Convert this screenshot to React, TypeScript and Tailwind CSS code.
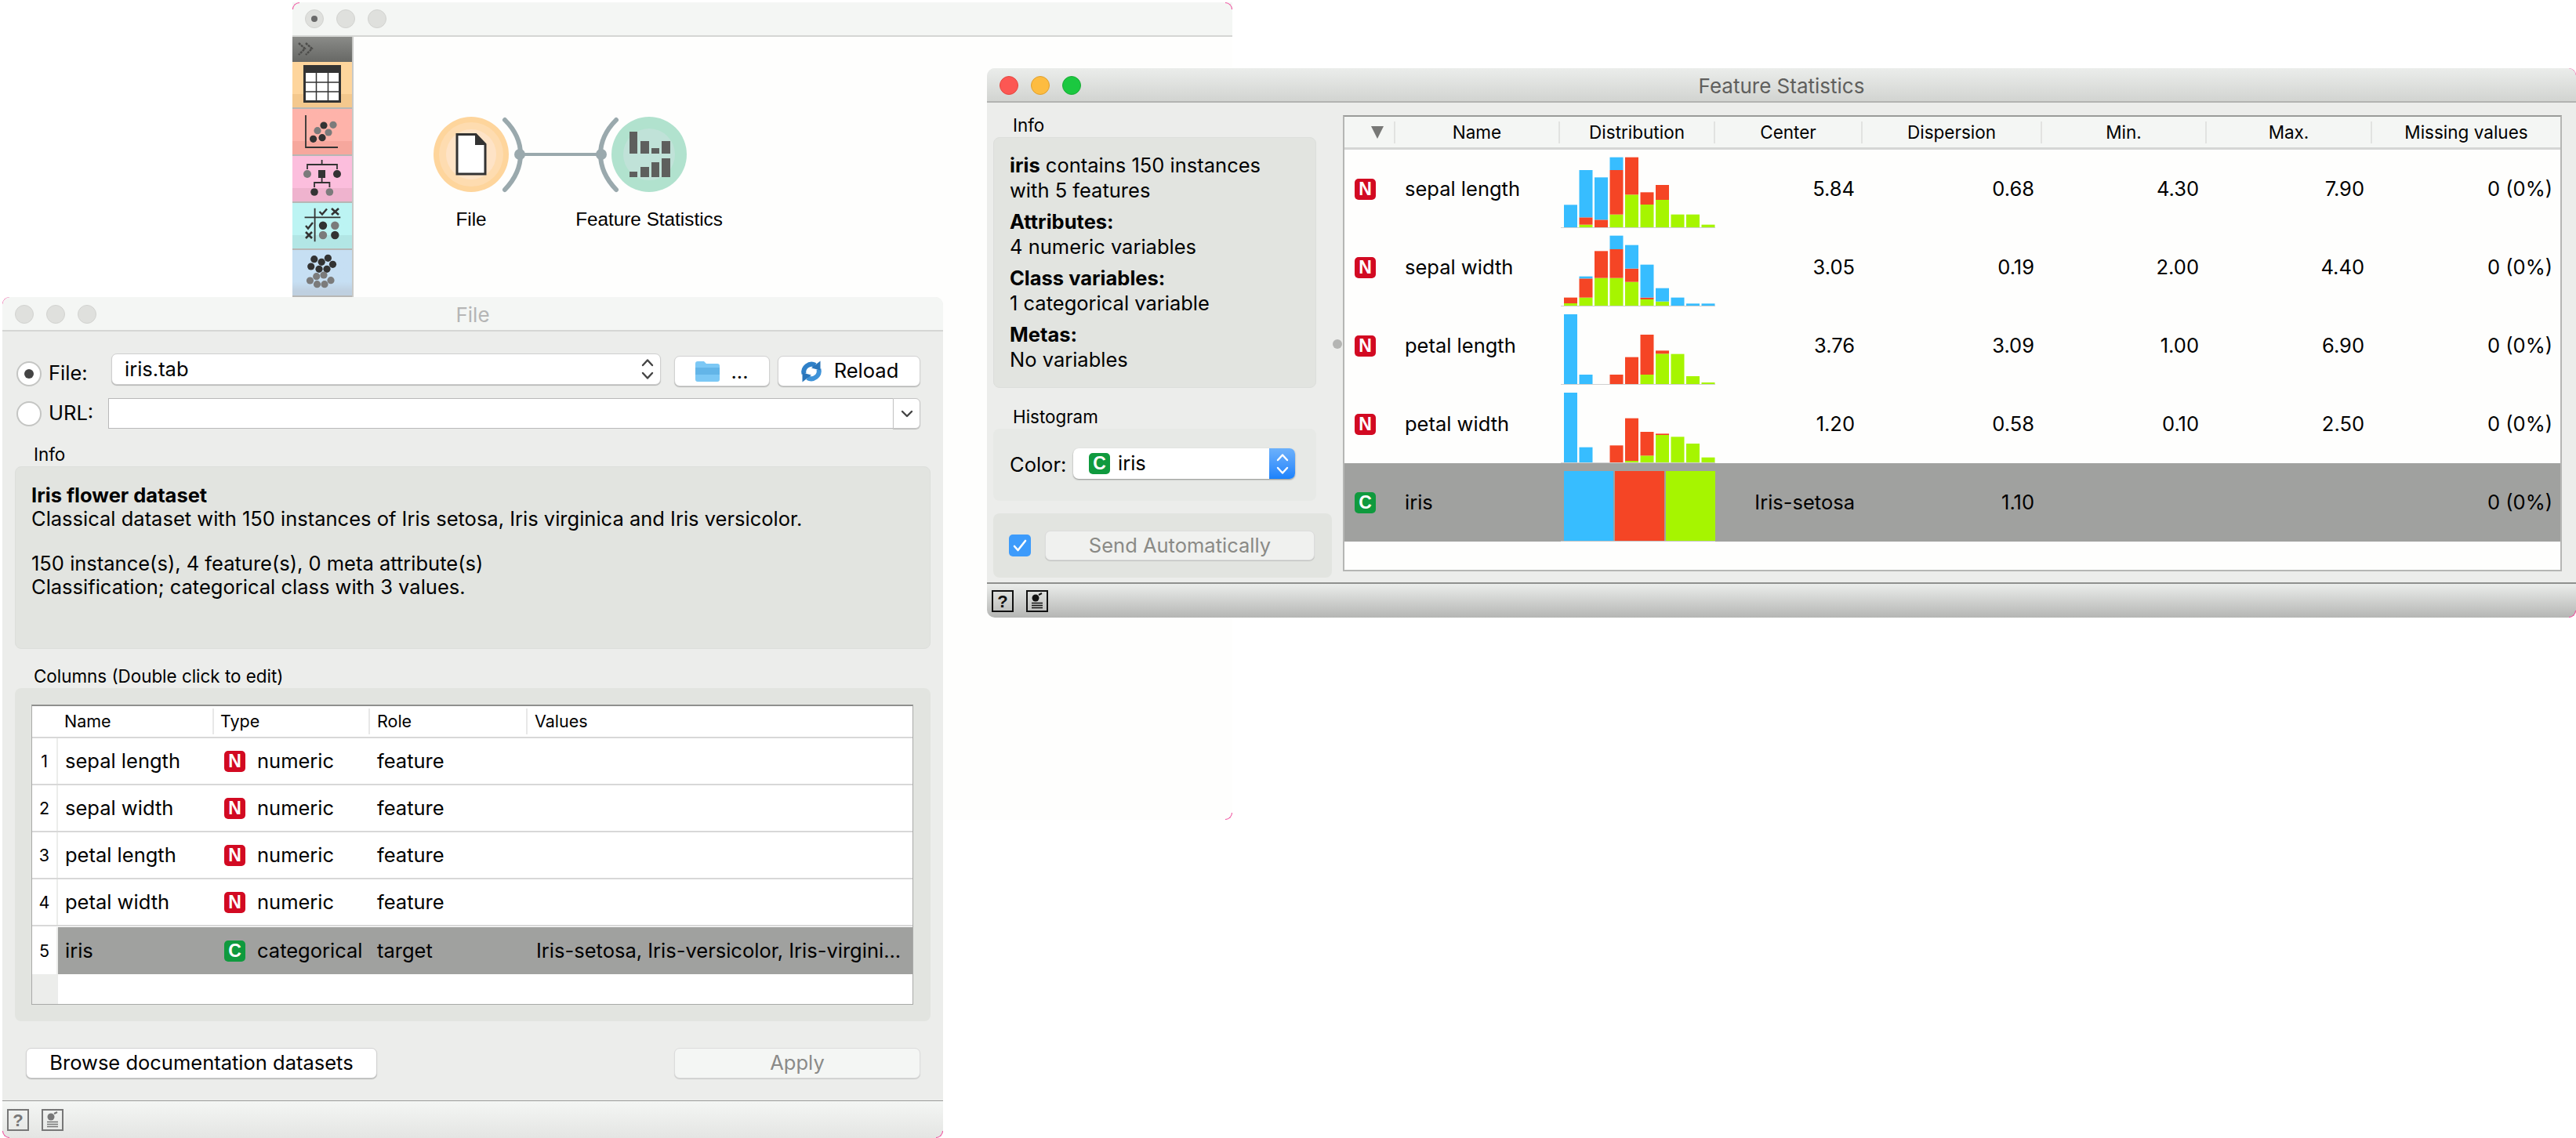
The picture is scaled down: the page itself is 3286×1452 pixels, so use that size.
import React from "react";

const BLUE = "#37bdff";
const RED = "#f54525";
const GREEN = "#a6f500";

// segments are [green, red, blue], heights in px x3 as read from the zoomed picture
const hist: Record<string, number[][]> = {
    "sepal length": [[0, 0, 86], [10, 28, 181], [0, 29, 162], [49, 170, 49], [125, 143, 0], [87, 47, 0], [105, 57, 0], [49, 0, 0], [49, 0, 0], [10, 0, 0]],
    "sepal width": [[9, 22, 0], [31, 73, 8], [106, 103, 0], [106, 110, 52], [91, 51, 90], [24, 7, 126], [16, 0, 51], [0, 0, 31], [0, 0, 8], [0, 0, 8]],
    "petal length": [[0, 0, 267], [0, 0, 36], [0, 0, 0], [0, 36, 0], [0, 103, 0], [36, 153, 0], [116, 12, 0], [115, 0, 0], [30, 0, 0], [6, 0, 0]],
    "petal width": [[0, 0, 267], [0, 0, 58], [0, 0, 0], [0, 65, 0], [6, 163, 0], [26, 91, 0], [105, 5, 0], [98, 0, 0], [72, 0, 0], [19, 0, 0]],
};

const fsRows = [
    { name: "sepal length", center: "5.84", disp: "0.68", min: "4.30", max: "7.90" },
    { name: "sepal width", center: "3.05", disp: "0.19", min: "2.00", max: "4.40" },
    { name: "petal length", center: "3.76", disp: "3.09", min: "1.00", max: "6.90" },
    { name: "petal width", center: "1.20", disp: "0.58", min: "0.10", max: "2.50" },
];

const fileRows = [
    { name: "sepal length", type: "numeric", role: "feature", values: "" },
    { name: "sepal width", type: "numeric", role: "feature", values: "" },
    { name: "petal length", type: "numeric", role: "feature", values: "" },
    { name: "petal width", type: "numeric", role: "feature", values: "" },
];

function Histogram({ name }: { name: string }) {
    const baseline = 99;
    return (
        <svg width="198" height="100" viewBox="0 0 198 100" className="block">
            {hist[name].map((segs, i) => {
                const x = 5 + i * 19.5;
                const g = segs[0] / 3;
                const r = segs[1] / 3;
                const b = segs[2] / 3;
                return (
                    <g key={i}>
                        <rect x={x} y={baseline - g} width="17" height={g} fill={GREEN} />
                        <rect x={x} y={baseline - g - r} width="17" height={r} fill={RED} />
                        <rect x={x} y={baseline - g - r - b} width="17" height={b} fill={BLUE} />
                    </g>
                );
            })}
            <rect x="1" y="99" width="198" height="1" fill="#d0d0d0" />
        </svg>
    );
}

function ClassHistogram() {
    return (
        <svg width="198" height="100" viewBox="0 0 198 100" className="block">
            <rect x="5" y="10" width="63" height="89" fill={BLUE} />
            <rect x="70" y="10" width="63" height="89" fill={RED} />
            <rect x="135" y="10" width="63" height="89" fill={GREEN} />
            <rect x="1" y="99" width="198" height="1" fill="#c4c4c4" />
        </svg>
    );
}

function Badge({ kind }: { kind: "N" | "C" }) {
    return (
        <span
            className={`flex h-[27px] w-[27px] shrink-0 items-center justify-center rounded-[5px] font-['Liberation_Sans',sans-serif] text-[23px] font-bold leading-none text-white ${kind === "N" ? "bg-[#d20a22]" : "bg-[#0f9a3e]"}`}
        >
            {kind}
        </span>
    );
}

function Lights({ dot }: { dot?: boolean }) {
    return (
        <div className="flex items-center gap-[16px]">
            {[0, 1, 2].map((i) => (
                <span key={i} className="flex h-[24px] w-[24px] items-center justify-center rounded-full border border-[#d2d3d0] bg-[#dfe0dd]">
                    {dot && i === 0 ? <span className="h-[8px] w-[8px] rounded-full bg-[#6a6a6a]" /> : null}
                </span>
            ))}
        </div>
    );
}

function ColorLights() {
    return (
        <div className="flex items-center gap-[16px]">
            <span className="h-[24px] w-[24px] rounded-full border border-[#e5463f] bg-[#fc5753]" />
            <span className="h-[24px] w-[24px] rounded-full border border-[#dfa02e] bg-[#fdbc40]" />
            <span className="h-[24px] w-[24px] rounded-full border border-[#1aab36] bg-[#1bc840]" />
        </div>
    );
}

function Updown({ color }: { color: string }) {
    return (
        <svg width="16" height="30" viewBox="0 0 16 30" fill="none" stroke={color} strokeWidth="2.4" strokeLinecap="round" strokeLinejoin="round">
            <path d="M2 10 L8 3.5 L14 10" />
            <path d="M2 20 L8 26.5 L14 20" />
        </svg>
    );
}

function HelpIcons({ color }: { color: string }) {
    return (
        <div className="flex gap-[16px]">
            <svg width="28" height="28" viewBox="0 0 28 28" fill="none">
                <rect x="1" y="1" width="26" height="26" stroke={color} strokeWidth="2" />
                <text x="14" y="22" textAnchor="middle" fontSize="22" fontWeight="700" fontFamily="Liberation Sans, sans-serif" fill={color}>?</text>
            </svg>
            <svg width="28" height="28" viewBox="0 0 28 28" fill="none">
                <rect x="1" y="1" width="26" height="26" stroke={color} strokeWidth="2" />
                <circle cx="12" cy="10" r="4.5" fill={color} />
                <path d="M16 6 L20 4" stroke={color} strokeWidth="2" />
                <path d="M7 16.5H21M7 19.5H21M7 22.5H21" stroke={color} strokeWidth="1.6" />
            </svg>
        </div>
    );
}

function PinkCorner({ className }: { className: string }) {
    return <span className={`absolute h-[9px] w-[9px] border-[#f0479a] ${className}`} />;
}

function Radio({ on }: { on?: boolean }) {
    return (
        <span className="flex h-[32px] w-[32px] shrink-0 items-center justify-center rounded-full border-2 border-[#c4c5c3] bg-white">
            {on ? <span className="h-[12px] w-[12px] rounded-full bg-[#444]" /> : null}
        </span>
    );
}

function ReloadIcon() {
    return (
        <svg width="30" height="30" viewBox="0 0 30 30" fill="none">
            <path d="M5.500 18A10 10 0 0 1 20 7" stroke="#2f80c8" strokeWidth="6" />
            <path d="M24.500 12A10 10 0 0 1 10 23" stroke="#3f93d8" strokeWidth="6" />
            <path d="M26.500 1.500V13.500L15 10.500Z" fill="#2a75ba" />
            <path d="M3.500 28.500V16.500L15 19.500Z" fill="#2a75ba" />
        </svg>
    );
}

function Sidebar() {
    const dark = "#333333";
    const gray = "#7b7b7b";
    const cats = [
        {
            bg: "bg-linear-to-b from-[#fed59c] from-70% to-[#f4c88d] to-70%",
            icon: (
                <>
                    <rect x="15.5" y="5.5" width="45" height="45" fill="#fff" stroke={dark} strokeWidth="3" />
                    <rect x="15" y="4" width="46" height="10" fill={dark} />
                    <path d="M30.5 14V50M45.5 14V50M16 26H60M16 38H60" stroke={dark} strokeWidth="1.5" />
                </>
            ),
        },
        {
            bg: "bg-linear-to-b from-[#feb3aa] from-70% to-[#f6a79d] to-70%",
            icon: (
                <>
                    <path d="M17 8V49H58" fill="none" stroke={dark} strokeWidth="1.8" />
                    {[[40, 21, dark], [52, 20.3, gray], [32, 27.7, gray], [46, 30, gray], [38, 36.7, dark], [26.6, 38.3, dark]].map(([x, y, c], i) => (
                        <circle key={i} cx={x as number} cy={y as number} r="4.6" fill={c as string} />
                    ))}
                </>
            ),
        },
        {
            bg: "bg-linear-to-b from-[#fcbedd] from-70% to-[#efb3ce] to-70%",
            icon: (
                <>
                    <path d="M37.6 5V11M19 17V11H57V17M37.6 28V34M28 40V34H47.4V40" fill="none" stroke={dark} strokeWidth="1.8" />
                    <circle cx="19" cy="23" r="5" fill={gray} />
                    <rect x="33" y="18" width="9" height="10" fill={dark} />
                    <circle cx="57" cy="23" r="5" fill={dark} />
                    <circle cx="28" cy="46" r="4.8" fill={dark} />
                    <circle cx="47.4" cy="46" r="4.8" fill={gray} />
                </>
            ),
        },
        {
            bg: "bg-linear-to-b from-[#bcf4f3] from-70% to-[#b2e6e5] to-70%",
            icon: (
                <>
                    <path d="M15.6 18.3H61.3M28.6 6.7V49.3" stroke={dark} strokeWidth="1.8" />
                    <path d="M34.5 11L38 14.5L44 7.5M17 29L20 32.5L26 25" fill="none" stroke={dark} strokeWidth="2.4" />
                    <path d="M50 7L59 15M59 7L50 15M17 37L25 45M25 37L17 45" stroke={dark} strokeWidth="2.6" />
                    <circle cx="39" cy="28.7" r="5.2" fill={dark} />
                    <circle cx="54.3" cy="28.7" r="5.2" fill={gray} />
                    <circle cx="39" cy="41" r="5.2" fill={gray} />
                    <circle cx="54.3" cy="41" r="5.2" fill={dark} />
                </>
            ),
        },
        {
            bg: "bg-linear-to-b from-[#c6dff3] from-70% to-[#bfd0e0] to-90%",
            icon: (
                <>
                    {[[27.8, 11.7], [45.4, 10.3], [37.2, 15.3], [51.5, 18.3], [23.7, 21], [34, 24.3], [44, 24.3]].map(([x, y], i) => (
                        <circle key={i} cx={x} cy={y} r="4.6" fill={dark} />
                    ))}
                    {[[30.7, 33.7], [40, 32], [22.5, 39], [49, 38.7], [31.5, 43.7], [41, 43.7]].map(([x, y], i) => (
                        <circle key={i} cx={x} cy={y} r="4.6" fill={gray} />
                    ))}
                </>
            ),
        },
    ];
    return (
        <div className="flex w-[78px] shrink-0 flex-col border-r-2 border-[#c9cac8]">
            <div className="flex h-[32px] items-center bg-linear-to-b from-[#8a8b88] to-[#676865] pl-[7px]">
                <svg width="24" height="18" viewBox="0 0 24 18" fill="none" stroke="#4c4c4a" strokeWidth="2.4" strokeDasharray="3 1">
                    <path d="M1 1L9 8L1 16M10 1L18 8L10 16" />
                </svg>
            </div>
            {cats.map((c, i) => (
                <div key={i} className={`h-[60px] border-b-2 border-[#b7b7b5] ${c.bg}`}>
                    <svg width="76" height="58" viewBox="0 0 76 58" className="block">{c.icon}</svg>
                </div>
            ))}
        </div>
    );
}

function Scheme() {
    return (
        <svg width="1121" height="999" viewBox="451 47 1121 999" className="absolute left-0 top-0">
            <path d="M644 153 Q664 173 664 197 Q664 221 644 242" fill="none" stroke="#9aa9ad" strokeWidth="6" strokeLinecap="round" />
            <path d="M786 153 Q766 173 766 197 Q766 221 786 242" fill="none" stroke="#9aa9ad" strokeWidth="6" strokeLinecap="round" />
            <path d="M663 197H767" stroke="#9aa9ad" strokeWidth="4" />
            <circle cx="663" cy="197" r="7" fill="#9aa9ad" />
            <circle cx="767" cy="197" r="7" fill="#9aa9ad" />

            <ellipse cx="601" cy="197" rx="48" ry="48" fill="#fed59c" />
            <ellipse cx="601" cy="197" rx="41" ry="41" fill="#fedcb0" />
            <ellipse cx="601" cy="197" rx="32" ry="32" fill="#fee3c6" />
            <path d="M583 171.500H607L619 184V222H583Z" fill="#fff" stroke="#333" strokeWidth="3" />
            <path d="M606 171L620 185H606Z" fill="#333" />

            <ellipse cx="828" cy="197" rx="48" ry="48" fill="#b1e2ce" />
            <ellipse cx="828" cy="197" rx="33" ry="33" fill="#c0e2d8" />
            <g fill="#5e5f5d">
                <rect x="803" y="168" width="10" height="28" />
                <rect x="817" y="180" width="11" height="16" />
                <rect x="831" y="189" width="10" height="7" />
                <rect x="844" y="180" width="11" height="16" />
                <rect x="803" y="219" width="10" height="7" />
                <rect x="817" y="213" width="11" height="13" />
                <rect x="831" y="207" width="10" height="19" />
                <rect x="844" y="202" width="11" height="24" />
            </g>
        </svg>
    );
}

function FileWindow() {
    return (
        <div className="absolute left-[3px] top-[379px] flex h-[1073px] w-[1200px] flex-col rounded-t-[10px] rounded-b-[10px] bg-[#ecedeb] text-[25.5px] text-black">
            <PinkCorner className="left-0 top-0 rounded-tl-[9px] border-l border-t" />
            <PinkCorner className="bottom-0 left-0 rounded-bl-[9px] border-b border-l" />
            <PinkCorner className="bottom-0 right-0 rounded-br-[9px] border-b border-r" />
            <div className="relative flex h-[44px] shrink-0 items-center justify-center rounded-t-[10px] border-b-2 border-[#d5d6d4] bg-[#f4f6f4] pt-[2px] text-[26px] text-[#b5b5b5]">
                <div className="absolute left-[16px] top-[10px]">
                    <Lights />
                </div>
                File
            </div>

            <div className="mt-[28px] flex h-[42px] shrink-0 items-start pl-[18px]">
                <div className="mt-[10px]">
                    <Radio on />
                </div>
                <span className="ml-[9px] mt-[9px] w-[80px] leading-[32px]">File:</span>
                <div className="flex h-[40px] w-[701px] items-center justify-between rounded-[7px] border border-[#cfcfcf] bg-white pl-[16px] pr-[8px] shadow-[0_1px_1px_rgba(0,0,0,0.25)]">
                    iris.tab
                    <Updown color="#444" />
                </div>
                <div className="ml-[17px] mt-[3px] flex h-[39px] w-[122px] items-center justify-center gap-[14px] rounded-[7px] border border-[#d2d2d2] bg-white shadow-[0_1px_1px_rgba(0,0,0,0.25)]">
                    <svg width="31" height="26" viewBox="0 0 31 26">
                        <path d="M0 3Q0 0 3 0H11L14 3H28Q31 3 31 6V23Q31 26 28 26H3Q0 26 0 23Z" fill="#7cc8f5" />
                        <rect x="0" y="8" width="31" height="9" fill="#63b5e8" />
                    </svg>
                    <span className="leading-none">...</span>
                </div>
                <div className="ml-[10px] mt-[3px] flex h-[39px] w-[182px] items-center justify-center gap-[14px] rounded-[7px] border border-[#d2d2d2] bg-white shadow-[0_1px_1px_rgba(0,0,0,0.25)]">
                    <ReloadIcon />
                    Reload
                </div>
            </div>

            <div className="mt-[15px] flex h-[39px] shrink-0 items-center pl-[18px]">
                <Radio />
                <span className="ml-[9px] w-[76px]">URL:</span>
                <div className="h-[39px] w-[1001px] border border-[#b9b9b9] border-r-0 bg-white" />
                <div className="flex h-[39px] w-[35px] items-center justify-center rounded-r-[6px] border border-[#c4c4c4] bg-white shadow-[0_1px_1px_rgba(0,0,0,0.2)]">
                    <svg width="16" height="10" viewBox="0 0 16 10" fill="none" stroke="#444" strokeWidth="2.4" strokeLinecap="round" strokeLinejoin="round">
                        <path d="M2 2L8 8L14 2" />
                    </svg>
                </div>
            </div>

            <div className="mt-[18px] flex h-[30px] shrink-0 items-center pl-[40px] text-[22.4px]">Info</div>
            <div className="ml-[16px] h-[233px] w-[1168px] shrink-0 rounded-[8px] border border-[#dcdedb] bg-[#e2e4e0] pl-[20px] pt-[21px] leading-[30px]">
                <div className="font-bold">Iris flower dataset</div>
                <div>Classical dataset with 150 instances of Iris setosa, Iris virginica and Iris versicolor.</div>
                <div className="mt-[27px]">150 instance(s), 4 feature(s), 0 meta attribute(s)</div>
                <div>Classification; categorical class with 3 values.</div>
            </div>

            <div className="mt-[20px] flex h-[30px] shrink-0 items-center pl-[40px] text-[22.4px]">Columns (Double click to edit)</div>
            <div className="ml-[16px] h-[425px] w-[1168px] shrink-0 rounded-[8px] bg-[#e2e4e0] pl-[21px] pt-[21px]">
                <div className="flex h-[383px] w-[1125px] flex-col border border-t-2 border-[#a9aaa8] border-t-[#8f908e] bg-white">
                    <div className="flex h-[41px] shrink-0 items-center border-b-2 border-[#d8d8d8] text-[21.5px]">
                        <div className="w-[41px] shrink-0" />
                        <div className="w-[191px] shrink-0 border-r-2 border-[#e8e8e8]">Name</div>
                        <div className="w-[199px] shrink-0 border-r-2 border-[#e8e8e8] pl-[8px]">Type</div>
                        <div className="w-[201px] shrink-0 border-r-2 border-[#e8e8e8] pl-[9px]">Role</div>
                        <div className="pl-[9px]">Values</div>
                    </div>
                    {fileRows.map((r, i) => (
                        <div key={r.name} className="flex h-[60px] shrink-0 items-center border-b-2 border-[#d8d8d8]">
                            <div className="flex h-full w-[33px] shrink-0 items-center justify-center border-r-2 border-[#ecedeb] text-[21.5px]">{i + 1}</div>
                            <div className="w-[199px] shrink-0 pl-[9px]">{r.name}</div>
                            <div className="flex w-[199px] shrink-0 items-center gap-[15px] pl-[13px]">
                                <Badge kind="N" />
                                {r.type}
                            </div>
                            <div className="pl-[9px]">{r.role}</div>
                        </div>
                    ))}
                    <div className="mt-[1px] flex h-[60px] shrink-0 items-center">
                        <div className="flex h-full w-[33px] shrink-0 items-center justify-center border-r-2 border-[#ecedeb] text-[21.5px]">5</div>
                        <div className="flex h-full flex-1 items-center bg-[#a0a19f]">
                            <div className="w-[199px] shrink-0 pl-[9px]">iris</div>
                            <div className="flex w-[199px] shrink-0 items-center gap-[15px] pl-[13px]">
                                <Badge kind="C" />
                                categorical
                            </div>
                            <div className="w-[201px] shrink-0 pl-[9px]">target</div>
                            <div className="truncate pl-[11px]">Iris-setosa, Iris-versicolor, Iris-virgini...</div>
                        </div>
                    </div>
                    <div className="flex-1">
                        <div className="h-full w-[33px] bg-[#ecedeb]" />
                    </div>
                </div>
            </div>

            <div className="mt-[34px] flex h-[39px] shrink-0 justify-between pl-[30px] pr-[29px]">
                <div className="flex w-[448px] items-center justify-center rounded-[7px] border border-[#d2d2d2] bg-white shadow-[0_1px_1px_rgba(0,0,0,0.25)]">
                    Browse documentation datasets
                </div>
                <div className="flex w-[314px] items-center justify-center rounded-[7px] border border-[#dcdcdc] bg-[#f4f6f4] text-[#8a8a88] shadow-[0_1px_1px_rgba(0,0,0,0.15)]">
                    Apply
                </div>
            </div>

            <div className="mt-[28px] flex flex-1 items-center rounded-b-[10px] border-t border-[#9a9b99] bg-linear-to-b from-[#f4f6f4] to-[#e4e5e3] pl-[6px]">
                <HelpIcons color="#777" />
            </div>
        </div>
    );
}

function StatsWindow() {
    const hdrCol = "flex h-[28px] shrink-0 items-center justify-center border-r-2 border-[#e2e3e1]";
    return (
        <div className="absolute left-[1259px] top-[87px] flex h-[701px] w-[2027px] flex-col rounded-[10px] bg-[#ecedeb] text-[25.5px] text-black">
            <PinkCorner className="right-0 top-0 rounded-tr-[9px] border-r border-t" />
            <PinkCorner className="bottom-0 right-0 rounded-br-[9px] border-b border-r" />
            <div className="relative flex h-[44px] shrink-0 items-center justify-center rounded-t-[10px] border-b-2 border-[#b2b3b1] bg-linear-to-b from-[#ebedeb] to-[#d2d4d1] pt-[2px] text-[26px] text-[#5f5f5d]">
                <div className="absolute left-[16px] top-[10px]">
                    <ColorLights />
                </div>
                Feature Statistics
            </div>

            <div className="relative flex h-[612px] shrink-0">
                <div className="ml-[8px] w-[432px] shrink-0 pt-[14px]">
                    <div className="flex h-[30px] items-center pl-[25px] text-[22.4px]">Info</div>
                    <div className="h-[320px] w-[412px] rounded-[8px] border border-[#dcdedb] bg-[#e2e4e0] pl-[20px] pt-[19px] leading-[32px]">
                        <div><b>iris</b> contains 150 instances</div>
                        <div>with 5 features</div>
                        <div className="mt-[8px] font-bold">Attributes:</div>
                        <div>4 numeric variables</div>
                        <div className="mt-[8px] font-bold">Class variables:</div>
                        <div>1 categorical variable</div>
                        <div className="mt-[8px] font-bold">Metas:</div>
                        <div>No variables</div>
                    </div>

                    <div className="mt-[22px] flex h-[30px] items-center pl-[25px] text-[22.4px]">Histogram</div>
                    <div className="flex h-[92px] w-[412px] items-start rounded-[8px] bg-[#e7e9e6] pl-[21px] pt-[25px]">
                        <span className="mt-[2px] w-[81px]">Color:</span>
                        <div className="flex h-[39px] w-[283px] items-center rounded-[7px] bg-white pl-[20px] shadow-[0_1px_2px_rgba(0,0,0,0.4)]">
                            <Badge kind="C" />
                            <span className="ml-[10px] flex-1">iris</span>
                            <span className="flex h-[39px] w-[33px] items-center justify-center rounded-r-[7px] bg-linear-to-b from-[#6cb1fb] to-[#1a82fb]">
                                <Updown color="#fff" />
                            </span>
                        </div>
                    </div>

                    <div className="mt-[16px] flex h-[82px] w-[432px] items-center gap-[18px] rounded-[8px] bg-[#e2e4e0] pl-[20px]">
                        <span className="flex h-[28px] w-[28px] items-center justify-center rounded-[5px] bg-[#3d9bfb]">
                            <svg width="18" height="16" viewBox="0 0 18 16" fill="none" stroke="#fff" strokeWidth="2.600" strokeLinecap="round" strokeLinejoin="round">
                                <path d="M2 9L6.500 14L16 2" />
                            </svg>
                        </span>
                        <div className="flex h-[38px] w-[344px] items-center justify-center rounded-[7px] border border-[#dcdcdc] bg-[#f0f1ef] text-[#8a8a86] shadow-[0_1px_1px_rgba(0,0,0,0.15)]">
                            Send Automatically
                        </div>
                    </div>
                </div>

                <span className="absolute left-[441px] top-[302px] h-[12px] w-[12px] rounded-full bg-[#b4b5b3]" />

                <div className="ml-[14px] mt-[16px] flex h-[582px] w-[1555px] flex-col border-2 border-[#b5b6b4] border-t-[#9a9b99] bg-[#fefefd]">
                    <div className="flex h-[42px] shrink-0 items-center border-b-[3px] border-[#d5d6d5] bg-[#f4f6f4] text-[22.500px]">
                        <div className={`${hdrCol} w-[65px]`}>
                            <svg width="18" height="16" viewBox="0 0 18 16" className="ml-[20px]">
                                <path d="M1 0H17L9 16Z" fill="#777876" />
                            </svg>
                        </div>
                        <div className={`${hdrCol} w-[210px]`}>Name</div>
                        <div className={`${hdrCol} w-[198px]`}>Distribution</div>
                        <div className={`${hdrCol} w-[188px]`}>Center</div>
                        <div className={`${hdrCol} w-[229px]`}>Dispersion</div>
                        <div className={`${hdrCol} w-[210px]`}>Min.</div>
                        <div className={`${hdrCol} w-[211px]`}>Max.</div>
                        <div className="flex flex-1 justify-center">Missing values</div>
                    </div>

                    {fsRows.map((r) => (
                        <div key={r.name} className="flex h-[100px] shrink-0 items-center">
                            <div className="w-[65px] shrink-0 pl-[13px]">
                                <Badge kind="N" />
                            </div>
                            <div className="w-[210px] shrink-0 pl-[12px]">{r.name}</div>
                            <div className="w-[198px] shrink-0">
                                <Histogram name={r.name} />
                            </div>
                            <div className="w-[188px] shrink-0 pr-[10px] text-right">{r.center}</div>
                            <div className="w-[229px] shrink-0 pr-[10px] text-right">{r.disp}</div>
                            <div className="w-[210px] shrink-0 pr-[10px] text-right">{r.min}</div>
                            <div className="w-[211px] shrink-0 pr-[10px] text-right">{r.max}</div>
                            <div className="flex-1 pr-[10px] text-right">0 (0%)</div>
                        </div>
                    ))}

                    <div className="flex h-[100px] shrink-0 items-center bg-[#a0a19f]">
                        <div className="w-[65px] shrink-0 pl-[13px]">
                            <Badge kind="C" />
                        </div>
                        <div className="w-[210px] shrink-0 pl-[12px]">iris</div>
                        <div className="w-[198px] shrink-0">
                            <ClassHistogram />
                        </div>
                        <div className="w-[188px] shrink-0 pr-[10px] text-right">Iris-setosa</div>
                        <div className="w-[229px] shrink-0 pr-[10px] text-right">1.10</div>
                        <div className="w-[421px] shrink-0" />
                        <div className="flex-1 pr-[10px] text-right">0 (0%)</div>
                    </div>
                </div>
            </div>

            <div className="flex flex-1 items-center rounded-b-[10px] border-t-2 border-[#8f908e] bg-linear-to-b from-[#ebedeb] to-[#b5b6b4] pl-[6px]">
                <HelpIcons color="#111" />
            </div>
        </div>
    );
}

export default function App() {
    return (
        <div className="relative h-[1452px] w-[3286px] overflow-hidden bg-white font-[Inter,sans-serif]">
            {/* canvas window, sits behind the two widget windows */}
            <div className="absolute left-[373px] top-[3px] flex h-[1043px] w-[1199px] flex-col bg-[#fefefd]">
                <PinkCorner className="left-0 top-0 rounded-tl-[9px] border-l border-t" />
                <PinkCorner className="right-0 top-0 rounded-tr-[9px] border-r border-t" />
                <PinkCorner className="bottom-0 right-0 rounded-br-[9px] border-b border-r" />
                <div className="flex h-[44px] shrink-0 items-center border-b-2 border-[#d5d6d4] bg-[#f4f6f4] pl-[16px]">
                    <Lights dot />
                </div>
                <div className="relative flex flex-1">
                    <Sidebar />
                    <div className="relative flex-1">
                        <Scheme />
                        <span className="absolute left-[150px] top-[218px] w-[0px] whitespace-nowrap font-['Liberation_Sans',sans-serif] text-[24.3px] leading-[30px] text-black">
                            <span className="inline-block -translate-x-1/2">File</span>
                        </span>
                        <span className="absolute left-[377px] top-[218px] w-[0px] whitespace-nowrap font-['Liberation_Sans',sans-serif] text-[24.3px] leading-[30px] text-black">
                            <span className="inline-block -translate-x-1/2">Feature Statistics</span>
                        </span>
                    </div>
                </div>
            </div>
            <FileWindow />
            <StatsWindow />
        </div>
    );
}
